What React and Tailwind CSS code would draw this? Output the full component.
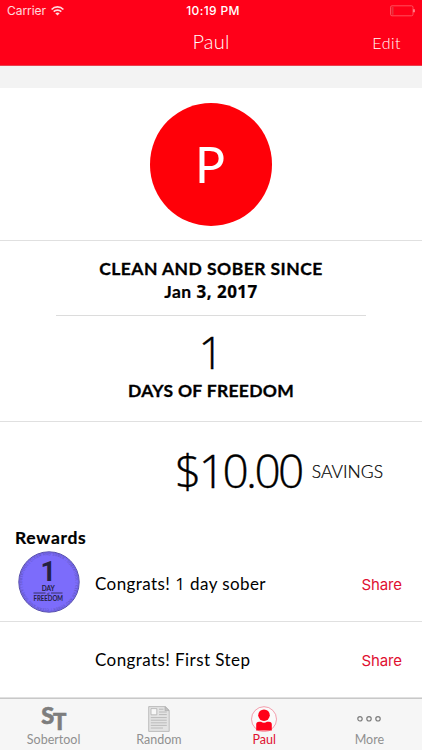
import React, { useState } from "react";

const rewards = [
    { id: 1, title: ["Congrats! ", "1", " day sober"], coin: true, row: "h-[72px]", text: "-mt-[4px]", share: "-mt-[1px]" },
    { id: 2, title: ["Congrats! First Step"], coin: false, row: "h-[76px]", text: "mt-[1px]", share: "mt-[3px]" },
]

function StatusBar() {
    return (
        <div className="grid grid-cols-3 h-[22px] px-[7px] items-center font-[Inter] text-[12px] leading-[22px]">
            <div className="flex items-center gap-[5px] text-white/85">
                <p className="tracking-[-0.05px]">Carrier</p>
                <svg width="13" height="10" viewBox="0 0 13 10" fill="none" stroke="currentColor" strokeWidth="1.7">
                    <path d="M0.6 3.5C3.8 0.1 9.2 0.1 12.4 3.5" />
                    <path d="M2.7 5.7C4.8 3.6 8.2 3.6 10.3 5.7" />
                    <path d="M6.5 9.4L4.3 7.2C5.6 6.1 7.4 6.1 8.7 7.2Z" fill="currentColor" stroke="none" />
                </svg>
            </div>
            <p className="text-center font-medium whitespace-nowrap tracking-[0.35px] pl-[4px]">10:19 PM</p>
            <div className="flex justify-end">
                <svg width="26" height="12" viewBox="0 0 26 12" fill="none">
                    <rect x="1.5" y="0.8" width="22.5" height="10" rx="1.5" stroke="#ff7078" strokeWidth="0.7" />
                    <rect x="2.5" y="1.8" width="2" height="8" fill="#e8303c" />
                    <path d="M25 4.3V7.3" stroke="#ffb0b4" strokeWidth="1.3" />
                </svg>
            </div>
        </div>
    )
}

function Coin() {
    return (
        <svg width="62" height="62" viewBox="0 0 62 62" fontFamily="Lato, sans-serif" fill="#24213f">
            <defs>
                <path id="ring" d="M31 57.8A26.8 26.8 0 1 1 31.1 57.8" />
            </defs>
            <circle cx="31" cy="31" r="30.2" fill="#7c6cfb" stroke="#5750a8" strokeWidth="1" />
            <circle cx="31" cy="31" r="29.2" fill="none" stroke="#6a5fd0" strokeWidth="0.5" />
            <text fontSize="3.3" fill="#5a50b4" textLength="166">
                <textPath href="#ring">CLEAN AND SOBER | SOBERTOOL | CLEAN AND SOBER | SOBERTOOL | CLEAN AND SOBER | </textPath>
            </text>
            <text x="30.3" y="30.4" fontSize="27" fontWeight="700" fontFamily="Roboto, sans-serif" textAnchor="middle">1</text>
            <text x="30.3" y="40.3" fontSize="6.8" fontWeight="700" textAnchor="middle" textLength="13.2" lengthAdjust="spacingAndGlyphs">DAY</text>
            <text x="30.3" y="43.5" fontSize="3" textAnchor="middle">of</text>
            <path d="M15.5 42H27.5M33 42H44.5" stroke="#24213f" strokeWidth="0.8" />
            <text x="30.3" y="50" fontSize="6.8" fontWeight="700" textAnchor="middle" textLength="29.5" lengthAdjust="spacingAndGlyphs">FREEDOM</text>
        </svg>
    )
}

function SobertoolIcon() {
    return (
        <svg className="overflow-visible" width="26" height="26" viewBox="0 0 26 26" fontFamily="Lato, sans-serif" fontWeight="900" fill="#7d7d7d" stroke="#7d7d7d" strokeWidth="0.6">
            <text x="0.2" y="18.4" fontSize="23" textLength="13" lengthAdjust="spacingAndGlyphs">S</text>
            <text x="12" y="23.8" fontSize="22" textLength="13.4" lengthAdjust="spacingAndGlyphs">T</text>
        </svg>
    )
}

function NewsIcon() {
    return (
        <svg width="22" height="26" viewBox="0 0 22 26" fill="none" stroke="#b0b0b0" strokeWidth="0.8">
            <path d="M0.7 0.6H17.4L21.2 4.3V25.4H0.7Z" fill="#e3e3e3" />
            <path d="M17 0.8V4.6H21Z" fill="#c4c4c4" />
            <path d="M3 2.6H8.8V8.8H3Z" fill="#f8f8f8" />
            <path d="M11 3.2H15.5M11 6H18.8M11 8.6H18.8M2.8 11.6H18.8M2.8 14.2H18.8M2.8 16.8H18.8M2.8 19.4H18.8M2.8 22H15" />
        </svg>
    )
}

function PersonIcon() {
    return (
        <svg width="26" height="26" viewBox="0 0 26 26" fill="#ff0019">
            <circle cx="13" cy="13.2" r="12.5" fill="#fafafa" stroke="#f06078" strokeWidth="0.6" />
            <circle cx="13" cy="9.2" r="5.8" />
            <path d="M5.2 24.4V18.5Q5.2 15.8 8.1 15.8H10Q13 17.8 16 15.8H17.9Q20.8 15.8 20.8 18.5V24.4Z" />
        </svg>
    )
}

function MoreIcon() {
    return (
        <svg width="26" height="26" viewBox="0 0 26 26" fill="none" stroke="#7d7d7d" strokeWidth="1.2">
            <circle cx="4" cy="12.8" r="2.2" />
            <circle cx="13" cy="12.8" r="2.2" />
            <circle cx="22" cy="12.8" r="2.2" />
        </svg>
    )
}

const tabs = [
    { name: "Sobertool", icon: <SobertoolIcon /> },
    { name: "Random", icon: <NewsIcon /> },
    { name: "Paul", icon: <PersonIcon /> },
    { name: "More", icon: <MoreIcon /> },
]

function App() {
    const [active, setActive] = useState("Paul")

    return (
        <div className="w-[422px] h-[750px] overflow-hidden flex flex-col bg-white text-black font-[Lato,sans-serif]">
            <header className="h-[66px] shrink-0 bg-[#ff0019] border-b border-[#e8404e] text-white">
                <StatusBar />
                <div className="grid grid-cols-3 h-[42px] items-center">
                    <span />
                    <h1 className="text-center text-[20px] font-light leading-[38px] pb-[4px] tracking-[0.2px]">Paul</h1>
                    <button className="justify-self-end mr-[21px] text-[16px] font-light leading-[20px] tracking-[0.5px]">Edit</button>
                </div>
            </header>
            <div className="h-[22px] shrink-0 bg-[#f3f3f3]" />

            <main className="flex-1 min-h-0 overflow-hidden">
                <section className="h-[153px] pt-[15px] border-b border-[#e0e0e0]">
                    <div className="w-[122px] h-[123px] mx-auto rounded-full bg-[#ff0008] text-white flex items-center justify-center">
                        <p className="text-[50px] leading-[122px] pr-[2px] pb-[1px]">P</p>
                    </div>
                </section>

                <section className="h-[181px] border-b border-[#e0e0e0] flex flex-col items-center text-[17.5px] font-bold">
                    <h2 className="mt-[16px] leading-[23px] tracking-[0.45px] [-webkit-text-stroke:0.3px_black]">CLEAN AND SOBER SINCE</h2>
                    <p className="leading-[23px] tracking-[0.5px] [-webkit-text-stroke:0.2px_black]">
                        Jan <span className="font-['Open_Sans'] text-[17px]">3, 2017</span>
                    </p>
                    <div className="w-[310px] mt-[12px] border-t border-[#dcdcdc]" />
                    <p className="mt-[11px] text-[44px] font-['Open_Sans'] font-light leading-[50px] [-webkit-text-stroke:0.4px_black]">1</p>
                    <p className="mt-[2px] leading-[23px] tracking-[0.3px] [-webkit-text-stroke:0.3px_black]">DAYS OF FREEDOM</p>
                </section>

                <section className="h-[98px] flex items-center justify-end pr-[39px] font-light">
                    <p className="text-[46px] leading-[94px] pb-[3px] font-['Open_Sans'] tracking-[-2.6px] [-webkit-text-stroke:0.4px_black]">$10.00</p>
                    <p className="ml-[10px] mt-[3px] text-[17.5px] [-webkit-text-stroke:0.2px_black]">SAVINGS</p>
                </section>

                <section>
                    <h3 className="mt-[6px] pl-[15px] text-[17.5px] font-bold leading-[24px] tracking-[0.7px] [-webkit-text-stroke:0.2px_black]">Rewards</h3>
                    {rewards.map((reward) => (
                        <div key={reward.id} className={`flex items-center border-b border-[#e0e0e0] ${reward.row}`}>
                            <div className="w-[95px] pl-[18px] pb-[8px]">{reward.coin && <Coin />}</div>
                            <p className={`flex-1 text-[17px] leading-[24px] tracking-[0.42px] whitespace-pre ${reward.text}`}>
                                {reward.title.map((part) => (
                                    part === "1" ? <span key={part} className="font-['Open_Sans']">1</span> : part
                                ))}
                            </p>
                            <button className={`mr-[20px] font-[Inter] text-[15px] tracking-[-0.1px] text-[#e01030] ${reward.share}`}>Share</button>
                        </div>
                    ))}
                </section>
            </main>

            <nav className="h-[52px] shrink-0 grid grid-cols-4 pl-[1px] bg-[#f6f6f6] border-t border-[#c8c8c8]">
                {tabs.map((tab) => (
                    <button
                        key={tab.name}
                        onClick={() => setActive(tab.name)}
                        className={`flex flex-col items-center pt-[7px] ${active === tab.name ? "text-[#e01030]" : "text-[#909090]"}`}>
                        {tab.icon}
                        <p className="text-[12.5px] leading-[16px]">{tab.name}</p>
                    </button>
                ))}
            </nav>
        </div>
    )
}

export default App
